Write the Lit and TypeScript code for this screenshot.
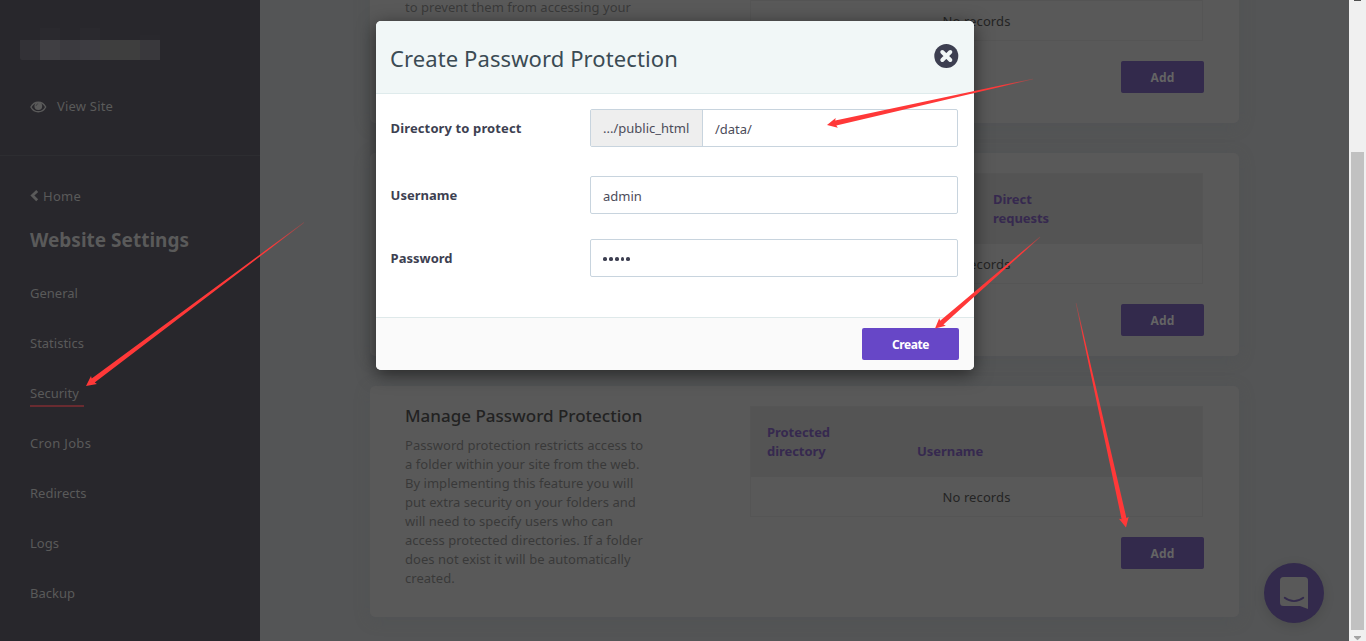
import { LitElement, html, svg, css } from "lit";
import { customElement, property } from "lit/decorators.js";

const FONT = css`"Noto Sans", "Open Sans", sans-serif`;

@customElement("side-bar")
class SideBar extends LitElement {
  static styles = css`
    :host { display: flex; flex-direction: column; width: 260px; flex: none; background: #28272c; color: #5a5a5a; font: 13px/20px ${FONT}; }
    .top { box-sizing: border-box; height: 156px; border-bottom: 1px solid #2d2d31; padding: 28px 0 0 20px; }
    .faint { display: flex; height: 12px; }
    .faint i, .mosaic i { width: 20px; }
    .faint .on { background: #2a292e; }
    .faint .low { background: #29282d; margin-top: 7px; }
    .mosaic { display: flex; height: 20px; }
    .m0 { background: #323136; border-radius: 0 0 0 2px; }
    .m1 { background: #403f43; }
    .m2 { background: #3b3a3f; }
    .m3 { background: #3d3c41; }
    .m4, .m5 { background: #3e3e3e; }
    .m6 { background: #39383c; }
    .view { display: flex; align-items: center; gap: 10px; padding: 36px 0 0 10px; letter-spacing: .2px; }
    .view svg { display: block; margin-top: 1px; }
    .home { display: flex; align-items: center; gap: 4px; padding: 30px 0 0 30px; letter-spacing: .25px; }
    h2 { margin: 0; padding: 19px 0 0 30px; font-size: 19px; line-height: 30px; font-weight: 700; letter-spacing: 0; white-space: nowrap; }
    nav { display: flex; flex-direction: column; align-items: flex-start; gap: 22px; padding: 28px 0 0 30px; }
    nav span { box-sizing: border-box; height: 28px; line-height: 20px; border-bottom: 2px solid transparent; }
    nav .wide { letter-spacing: .33px; }
    nav .active { border-color: #692b30; padding-right: 5px; height: 24px; margin-bottom: 4px; }
  `;
  render() {
    const items = [
      ["General", ""], ["Statistics", ""], ["Security", "active"], ["Cron Jobs", "wide"],
      ["Redirects", ""], ["Logs", ""], ["Backup", ""],
    ];
    return html`
      <div class="top">
        <div class="faint"><i></i><i class="on"></i><i></i><i class="on"></i><i></i><i></i><i class="low"></i></div>
        <div class="mosaic">${[0, 1, 2, 3, 4, 5, 6].map((n) => html`<i class="m${n}"></i>`)}</div>
        <div class="view">
          <svg width="17" height="12" viewBox="0 0 17 12"><path d="M.9 6C2.600 2.800 5.200 1.200 8.300 1.200S14 2.800 15.700 6C14 9.200 11.400 10.800 8.300 10.800S2.600 9.200.9 6z" fill="none" stroke="#5a5a5a" stroke-width="1.400"/><circle cx="8.300" cy="5.100" r="3.900" fill="#5a5a5a"/><path d="M6.200 4.900c0-1.200.8-2 2-2" fill="none" stroke="#39383c" stroke-width=".8"/></svg>
          <span>View Site</span>
        </div>
      </div>
      <div class="home">
        <svg width="9" height="12" viewBox="0 0 9 12"><path d="M7.200 1 2.400 5.600 7.200 10.200" fill="none" stroke="#5a5a5a" stroke-width="2.800"/></svg>
        <span>Home</span>
      </div>
      <h2>Website Settings</h2>
      <nav>${items.map(([t, c]) => html`<span class=${c}>${t}</span>`)}</nav>
    `;
  }
}

@customElement("record-table")
class RecordTable extends LitElement {
  @property({ attribute: false }) columns: { text: string[]; width: number }[] = [];
  static styles = css`
    :host { display: flex; flex-direction: column; width: 454px; font: 13px/19px ${FONT}; color: #242424; }
    .table { box-sizing: border-box; width: 453px; height: 111px; border: 1px solid #555; display: flex; flex-direction: column; }
    .head { height: 70px; box-sizing: border-box; background: #545454; display: flex; align-items: flex-end; padding: 0 0 16px 16px; color: #36294f; font-weight: 700; letter-spacing: -.05px; }
    .head span { display: block; white-space: nowrap; }
    .row { flex: 1; display: flex; align-items: center; justify-content: center; padding-top: 1px; letter-spacing: .1px; }
    .add { align-self: flex-end; margin-top: 20px; width: 83px; height: 32px; border-radius: 2px; background: #332a4c; color: #646464; display: flex; align-items: center; justify-content: center; font-weight: 700; font-size: 12px; letter-spacing: .1px; }
  `;
  render() {
    return html`
      <div class="table">
        <div class="head">${this.columns.map((c) => html`<div style="width:${c.width}px">${c.text.map((t) => html`<span>${t}</span>`)}</div>`)}</div>
        <div class="row">No records</div>
      </div>
      <div class="add">Add</div>
    `;
  }
}

@customElement("settings-panel")
class SettingsPanel extends LitElement {
  static styles = css`
    :host { flex: 1; display: flex; flex-direction: column; justify-content: flex-end; gap: 30px; box-sizing: border-box; padding: 0 110px 24px; overflow: hidden; background: #545556; font: 13px/19px ${FONT}; }
    .card { flex: none; box-sizing: border-box; display: flex; justify-content: space-between; width: 869px; padding: 20px 35px 0; background: #595959; border-radius: 5px; box-shadow: 0 3px 16px rgba(76, 79, 82, .28); }
    .one { height: 260px; padding-top: 67px; }
    .two { height: 203px; }
    .three { height: 231px; }
    .copy { color: #393939; white-space: nowrap; letter-spacing: .03px; }
    .one .copy { padding-top: 68px; }
    h3 { margin: 0 0 10px; font-size: 17px; line-height: 20px; font-weight: 500; letter-spacing: 0; color: #222; }
  `;
  render() {
    const lines = [
      "Password protection restricts access to",
      "a folder within your site from the web.",
      "By implementing this feature you will",
      "put extra security on your folders and",
      "will need to specify users who can",
      "access protected directories. If a folder",
      "does not exist it will be automatically",
      "created.",
    ];
    return html`
      <section class="card one"><div class="copy">to prevent them from accessing your</div><record-table></record-table></section>
      <section class="card two"><div class="copy"></div><record-table .columns=${[{ text: [""], width: 226 }, { text: ["Direct", "requests"], width: 120 }]}></record-table></section>
      <section class="card three">
        <div class="copy"><h3>Manage Password Protection</h3>${lines.map((l) => html`<div>${l}</div>`)}</div>
        <record-table .columns=${[{ text: ["Protected", "directory"], width: 150 }, { text: ["Username"], width: 150 }]}></record-table>
      </section>
    `;
  }
}

@customElement("protect-dialog")
class ProtectDialog extends LitElement {
  static styles = css`
    :host { display: flex; flex-direction: column; box-sizing: border-box; width: 598px; height: 349px; border-radius: 5px; overflow: hidden; background: #fff; box-shadow: 0 4px 18px rgba(0, 0, 0, .55); font: 13px/19px ${FONT}; color: #4c4c5a; }
    header { box-sizing: border-box; height: 73px; background: #f1f7f7; border-bottom: 1px solid #dfebec; display: flex; justify-content: space-between; align-items: center; padding: 0 15px 0 14px; }
    h1 { margin: 0; padding-top: 1px; font-size: 22px; line-height: 30px; font-weight: 400; letter-spacing: .1px; color: #3b4b54; white-space: nowrap; }
    header svg { display: block; margin-bottom: 2px; }
    .body { flex: 1; padding: 15px 16px 0 14.600px; }
    .field { display: flex; height: 38px; align-items: center; }
    .a { margin-bottom: 29px; }
    .b { margin-bottom: 25px; }
    label { width: 199.400px; font-weight: 700; color: #3d3f51; white-space: nowrap; }
    .a label { letter-spacing: .12px; }
    .input { box-sizing: border-box; flex: 1; height: 38px; border: 1px solid #c8d4de; border-radius: 2px; display: flex; }
    .value { padding: 10px 12px 0; }
    .prefix { box-sizing: border-box; width: 112px; padding: 9px 0 0 12px; background: #eee; border-right: 1px solid #c8d4de; }
    .dots { display: flex; align-items: center; gap: 2px; padding: 2px 12.500px 0; }
    .dots i { width: 3.700px; height: 3.700px; border-radius: 50%; background: #3d3f51; }
    footer { box-sizing: border-box; height: 53px; border-top: 1px solid #dfe9ea; background: #fafafa; display: flex; justify-content: flex-end; padding: 10px 15px 0; }
    .create { width: 97px; height: 32px; border-radius: 2px; background: #6747c7; color: #fff; display: flex; align-items: center; justify-content: center; font-weight: 700; font-size: 12px; letter-spacing: -.4px; }
  `;
  render() {
    return html`
      <header>
        <h1>Create Password Protection</h1>
        <svg width="25" height="24" viewBox="0 0 25 24"><circle cx="12.300" cy="12" r="12" fill="#3d3f51"/><path d="M8.300 8l8 8M16.300 8l-8 8" stroke="#f1f7f7" stroke-width="4" stroke-linecap="round"/></svg>
      </header>
      <div class="body">
        <div class="field a"><label>Directory to protect</label><div class="input"><div class="prefix">.../public_html</div><div class="value">/data/</div></div></div>
        <div class="field b"><label>Username</label><div class="input"><div class="value">admin</div></div></div>
        <div class="field"><label>Password</label><div class="input"><div class="dots"><i></i><i></i><i></i><i></i><i></i></div></div></div>
      </div>
      <footer><div class="create">Create</div></footer>
    `;
  }
}

// Tapered arrow from a faded tail point to a solid head at the tip.
function arrow(id: string, tx: number, ty: number, sx: number, sy: number) {
  const len = Math.hypot(sx - tx, sy - ty);
  const ux = (sx - tx) / len;
  const uy = (sy - ty) / len;
  const at = (along: number, side: number) => `${(tx + ux * along - uy * side).toFixed(2)},${(ty + uy * along + ux * side).toFixed(2)}`;
  return svg`
    <linearGradient id=${id} gradientUnits="userSpaceOnUse" x1=${tx} y1=${ty} x2=${sx} y2=${sy}>
      <stop offset="0" stop-color="#ff3838"/><stop offset=".85" stop-color="#ff3838"/><stop offset="1" stop-color="#ff3838" stop-opacity=".3"/>
    </linearGradient>
    <polygon fill="url(#${id})" points="${at(0, 0)} ${at(10, 5)} ${at(9, 2.5)} ${at(len, 0.3)} ${at(len, -0.3)} ${at(9, -2.5)} ${at(10, -5)}"/>
  `;
}

@customElement("app-root")
class AppRoot extends LitElement {
  static styles = css`
    :host { display: flex; position: relative; width: 1366px; height: 641px; overflow: hidden; }
    .scroll { width: 17px; flex: none; background: #f0f0f0; }
    .scroll svg, .arrows { display: block; }
    .modal { position: absolute; left: 376px; top: 21px; }
    .chat { position: absolute; left: 1264px; top: 563px; width: 60px; height: 60px; border-radius: 50%; background: #332a4c; box-shadow: 0 3px 12px rgba(0, 0, 0, .12); }
    .arrows { position: absolute; left: 0; top: 0; }
  `;
  render() {
    return html`
      <side-bar></side-bar>
      <settings-panel></settings-panel>
      <div class="scroll">
        <svg width="17" height="641" viewBox="0 0 17 641"><rect x="5" y="0" width="7" height="1" fill="#505050"/><rect x="2" y="152" width="13" height="478" fill="#c1c1c1"/><path d="M5 636h7v1l-3.500 3.300L5 637z" fill="#a3a3a3"/></svg>
      </div>
      <div class="chat">
        <svg width="60" height="60" viewBox="0 0 60 60"><path d="M19.500 14h21a3.500 3.500 0 0 1 3.500 3.500V46l-8-3H19.500a3.500 3.500 0 0 1-3.500-3.500v-22a3.500 3.500 0 0 1 3.500-3.500z" fill="#595959"/><path d="M20.700 34.800c5.700 4.400 12.900 4.400 18.600 0" fill="none" stroke="#332a4c" stroke-width="1.800" stroke-linecap="round"/></svg>
      </div>
      <protect-dialog class="modal"></protect-dialog>
      <svg class="arrows" width="1366" height="641" viewBox="0 0 1366 641">
        ${arrow("g1", 86, 386, 304, 222.5)}
        ${arrow("g2", 827, 125, 1033, 79)}
        ${arrow("g3", 935, 328.5, 1040, 237)}
        ${arrow("g4", 1126, 527.5, 1076, 303)}
      </svg>
    `;
  }
}
